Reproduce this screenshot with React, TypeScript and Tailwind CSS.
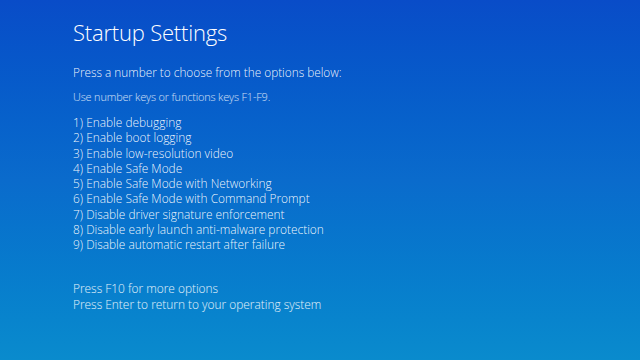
import React from "react";

const options = [
  "Enable debugging",
  "Enable boot logging",
  "Enable low-resolution video",
  "Enable Safe Mode",
  "Enable Safe Mode with Networking",
  "Enable Safe Mode with Command Prompt",
  "Disable driver signature enforcement",
  "Disable early launch anti-malware protection",
  "Disable automatic restart after failure",
];

const App: React.FC = () => {
  return (
    <div
      className="w-[640px] h-[360px] overflow-hidden bg-gradient-to-b from-[#094cc8] via-[#0a6bcc] to-[#0a8bcd] text-white pl-[73px]"
      style={{ fontFamily: '"Open Sans", "Noto Sans", sans-serif' }}
    >
      <h1 className="pt-[15px] text-[22px] font-light leading-[34px] tracking-[-0.2px]">
        Startup Settings
      </h1>
      <p className="mt-[15px] text-[11.8px] font-light leading-[17px] text-white/95">
        Press a number to choose from the options below:
      </p>
      <p className="mt-[8px] text-[10.9px] font-light leading-[16px] text-white/80 tracking-[-0.15px]">
        Use number keys or functions keys F1-F9.
      </p>
      <ul className="mt-[10px] text-[11.9px] font-light leading-[15.25px] text-white/95">
        {options.map((opt, i) => (
          <li key={i}>
            {i + 1}) {opt}
          </li>
        ))}
      </ul>
      <div className="mt-[29px] text-[11.9px] font-light leading-[15.25px] text-white/90">
        <p>Press F10 for more options</p>
        <p>Press Enter to return to your operating system</p>
      </div>
    </div>
  );
};

export default App;
